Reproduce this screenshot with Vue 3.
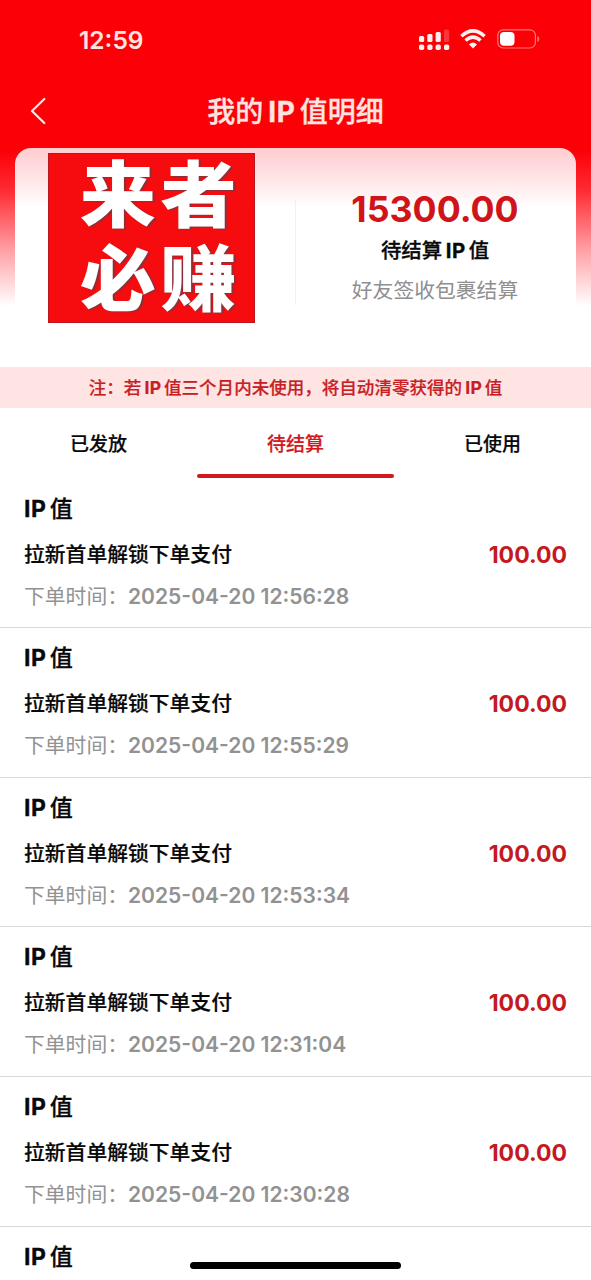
<script setup>
const tabs = [
  { name: '已发放', active: false },
  { name: '待结算', active: true },
  { name: '已使用', active: false },
]
const times = ['12:56:28', '12:55:29', '12:53:34', '12:31:04', '12:30:28', '']
</script>

<template>
  <main class="page">
    <header class="status">
      <span class="clock">12:59</span>
      <div class="indicators">
        <svg class="signal" width="32" height="22" viewBox="0 0 32 22" fill="#fff0ee">
          <rect x="0" y="7" width="5.2" height="6" rx="1.5" />
          <rect x="8.3" y="5" width="5.2" height="8" rx="1.5" />
          <rect x="16.6" y="3" width="5.2" height="10" rx="1.5" />
          <rect x="25" y="0.5" width="5.2" height="12.5" rx="1.5" opacity=".22" />
          <rect x="0" y="15.5" width="5.2" height="5.4" rx="1.7" />
          <rect x="8.3" y="15.5" width="5.2" height="5.4" rx="1.7" />
          <rect x="16.6" y="15.5" width="5.2" height="5.4" rx="1.7" />
          <rect x="25" y="15.5" width="5.2" height="5.4" rx="1.7" />
        </svg>
        <svg class="wifi" width="26" height="20" viewBox="0 0 26 20" fill="none" stroke="#fff0ee">
          <path d="M1.4 7.2Q13 -3.4 24.6 7.2" stroke-width="3.5" />
          <path d="M5.5 11.6Q13 4.6 20.5 11.6" stroke-width="3.4" />
          <path d="M13 19.5L9 15.4Q13 11.8 17 15.4Z" fill="#fff0ee" stroke="none" />
        </svg>
        <svg class="battery" width="44" height="20" viewBox="0 0 44 20">
          <rect x="0.8" y="0.8" width="37.6" height="18.2" rx="5.5" fill="none" stroke="#ff7775" stroke-width="1.2" />
          <rect x="3" y="3" width="14.5" height="13.8" rx="4" fill="#fff" />
          <path d="M40.3 7v6q2-.7 2-3t-2-3z" fill="#ff7775" />
        </svg>
      </div>
    </header>
    <nav class="nav">
      <svg class="back" width="18" height="28" viewBox="0 0 18 28" fill="none" stroke="#ffe4e0" stroke-width="2.3" stroke-linecap="round" stroke-linejoin="round">
        <path d="M14.3 2L2 14l12.3 12" />
      </svg>
      <h1>我的<span class="ip">IP</span>值明细</h1>
    </nav>

    <section class="card">
      <div class="poster"><span>来者</span><span>必赚</span></div>
      <div class="divider"></div>
      <div class="summary">
        <strong>15300.00</strong>
        <p class="label">待结算<span class="ip">IP</span>值</p>
        <p class="hint">好友签收包裹结算</p>
      </div>
    </section>

    <p class="notice">注：若<span class="ip">IP</span>值三个月内未使用，将自动清零获得的<span class="ip">IP</span>值</p>

    <div class="tabs">
      <div v-for="tab in tabs" :key="tab.name" class="tab" :class="{ active: tab.active }">{{ tab.name }}</div>
    </div>

    <ul class="list">
      <li v-for="time in times" :key="time" class="row">
        <h2><span class="ip">IP</span>值</h2>
        <template v-if="time">
          <div class="detail"><span>拉新首单解锁下单支付</span><b>100.00</b></div>
          <p class="time">下单时间：<span>2025-04-20 {{ time }}</span></p>
        </template>
      </li>
    </ul>
    <div class="home"></div>
  </main>
</template>

<style>
body {
  margin: 0;
  overflow: hidden;
}
</style>

<style scoped>
.page {
  position: relative;
  box-sizing: border-box;
  width: 591px;
  height: 1280px;
  overflow: hidden;
  font-family: Inter, "Noto Sans CJK SC", sans-serif;
  font-weight: 500;
  text-autospace: no-autospace;
  color: #080808;
  background: linear-gradient(#fb0007 0, #fb0007 150px, #ff2a32 190px, #ffa0a4 250px, #fff 306px);
}
h1, h2, p, ul { margin: 0; padding: 0; }
.status {
  display: flex;
  justify-content: space-between;
  height: 78px;
  padding: 0 50px 0 79px;
  box-sizing: border-box;
  color: #ffe4e0;
}
.clock {
  padding-top: 25px;
  font-size: 24.5px;
  line-height: 30px;
  font-weight: 600;
}
.indicators { display: flex; align-items: flex-start; padding-top: 29px; }
.wifi { margin-left: 9px; }
.battery { margin-left: 11px; }
.nav {
  display: grid;
  grid-template-columns: 60px 1fr 60px;
  align-items: center;
  height: 70px;
  color: #ffe4e0;
}
.back { margin-left: 30px; margin-top: -4px; }
h1 {
  text-align: center;
  font-size: 28px;
  line-height: 40px;
  font-weight: 500;
  margin-top: -2px;
  -webkit-text-stroke: .3px currentColor;
}
.ip { font-weight: 700; letter-spacing: .02em; margin: 0 .15em 0 .18em; }
.card {
  display: flex;
  height: 219px;
  margin: 0 15px;
  border-radius: 16px 16px 0 0;
  background: linear-gradient(#ffcdd0 0, #ffdcde 20px, #fff 60px);
}
.poster {
  box-sizing: border-box;
  width: 207px;
  height: 170px;
  margin: 5px 0 0 33px;
  background: #f60b0e;
  border: 1px solid #bb1520;
  color: #fff;
  font-family: "Noto Sans CJK SC", sans-serif;
  font-size: 74px;
  line-height: 84px;
  letter-spacing: 4.5px;
  font-weight: 900;
  text-shadow: 2px 1px 1px #88323a;
}
.poster span {
  display: block;
  width: 157px;
  white-space: nowrap;
  margin: -6px 0 6px 33px;
  transform: scale(1.03, .96);
}
.divider { width: 1px; height: 105px; margin: 52px 0 0 40px; background: #f4eff1; }
.summary {
  display: flex;
  flex-direction: column;
  align-items: center;
  flex: 1;
  padding: 38px 2px 0 0;
}
.summary strong { font-size: 35.7px; line-height: 46px; font-weight: 700; color: #d01419; }
.label { font-size: 20.4px; line-height: 30px; margin-top: 4px; -webkit-text-stroke: .3px currentColor; }
.hint { font-size: 20.8px; line-height: 30px; margin-top: 10px; font-weight: 400; color: #8f8f8f; }
.notice {
  height: 41px;
  text-align: center;
  font-size: 17.55px;
  line-height: 42px;
  color: #c81e24;
  background: #ffe4e4;
  white-space: nowrap;
  -webkit-text-stroke: .2px currentColor;
}
.tabs { display: grid; grid-template-columns: repeat(3, 1fr); height: 71px; background: #fff; }
.tab {
  position: relative;
  text-align: center;
  font-size: 19px;
  line-height: 74px;
  height: 71px;
  -webkit-text-stroke: .2px currentColor;
}
.active { color: #d3191e; }
.active::after {
  content: "";
  position: absolute;
  inset: auto 0 1px;
  height: 4px;
  border-radius: 2px;
  background: #d3191e;
}
.list { list-style: none; background: #fff; }
.row {
  box-sizing: border-box;
  height: 149.6px;
  padding: 13px 24px 0 24px;
  border-bottom: 1px solid #d9d9d9;
}
.row:first-child { height: 149.2px; }
.row h2 { font-size: 23px; line-height: 34px; font-weight: 500; -webkit-text-stroke: .3px currentColor; }
.row h2 .ip { margin-left: 0; }
.detail { display: flex; justify-content: space-between; margin-top: 14px; font-size: 20.8px; line-height: 30px; }
.detail > span { -webkit-text-stroke: .2px currentColor; }
.detail b { color: #c4191f; font-size: 23px; font-weight: 700; }
.time { margin-top: 13px; font-size: 20.8px; line-height: 28px; font-weight: 400; color: #929292; white-space: nowrap; }
.time span { font-weight: 600; font-size: 21.05px; }
.home {
  position: absolute;
  left: 190px;
  top: 1262px;
  width: 211px;
  height: 7px;
  border-radius: 4px;
  background: #000;
}
</style>
